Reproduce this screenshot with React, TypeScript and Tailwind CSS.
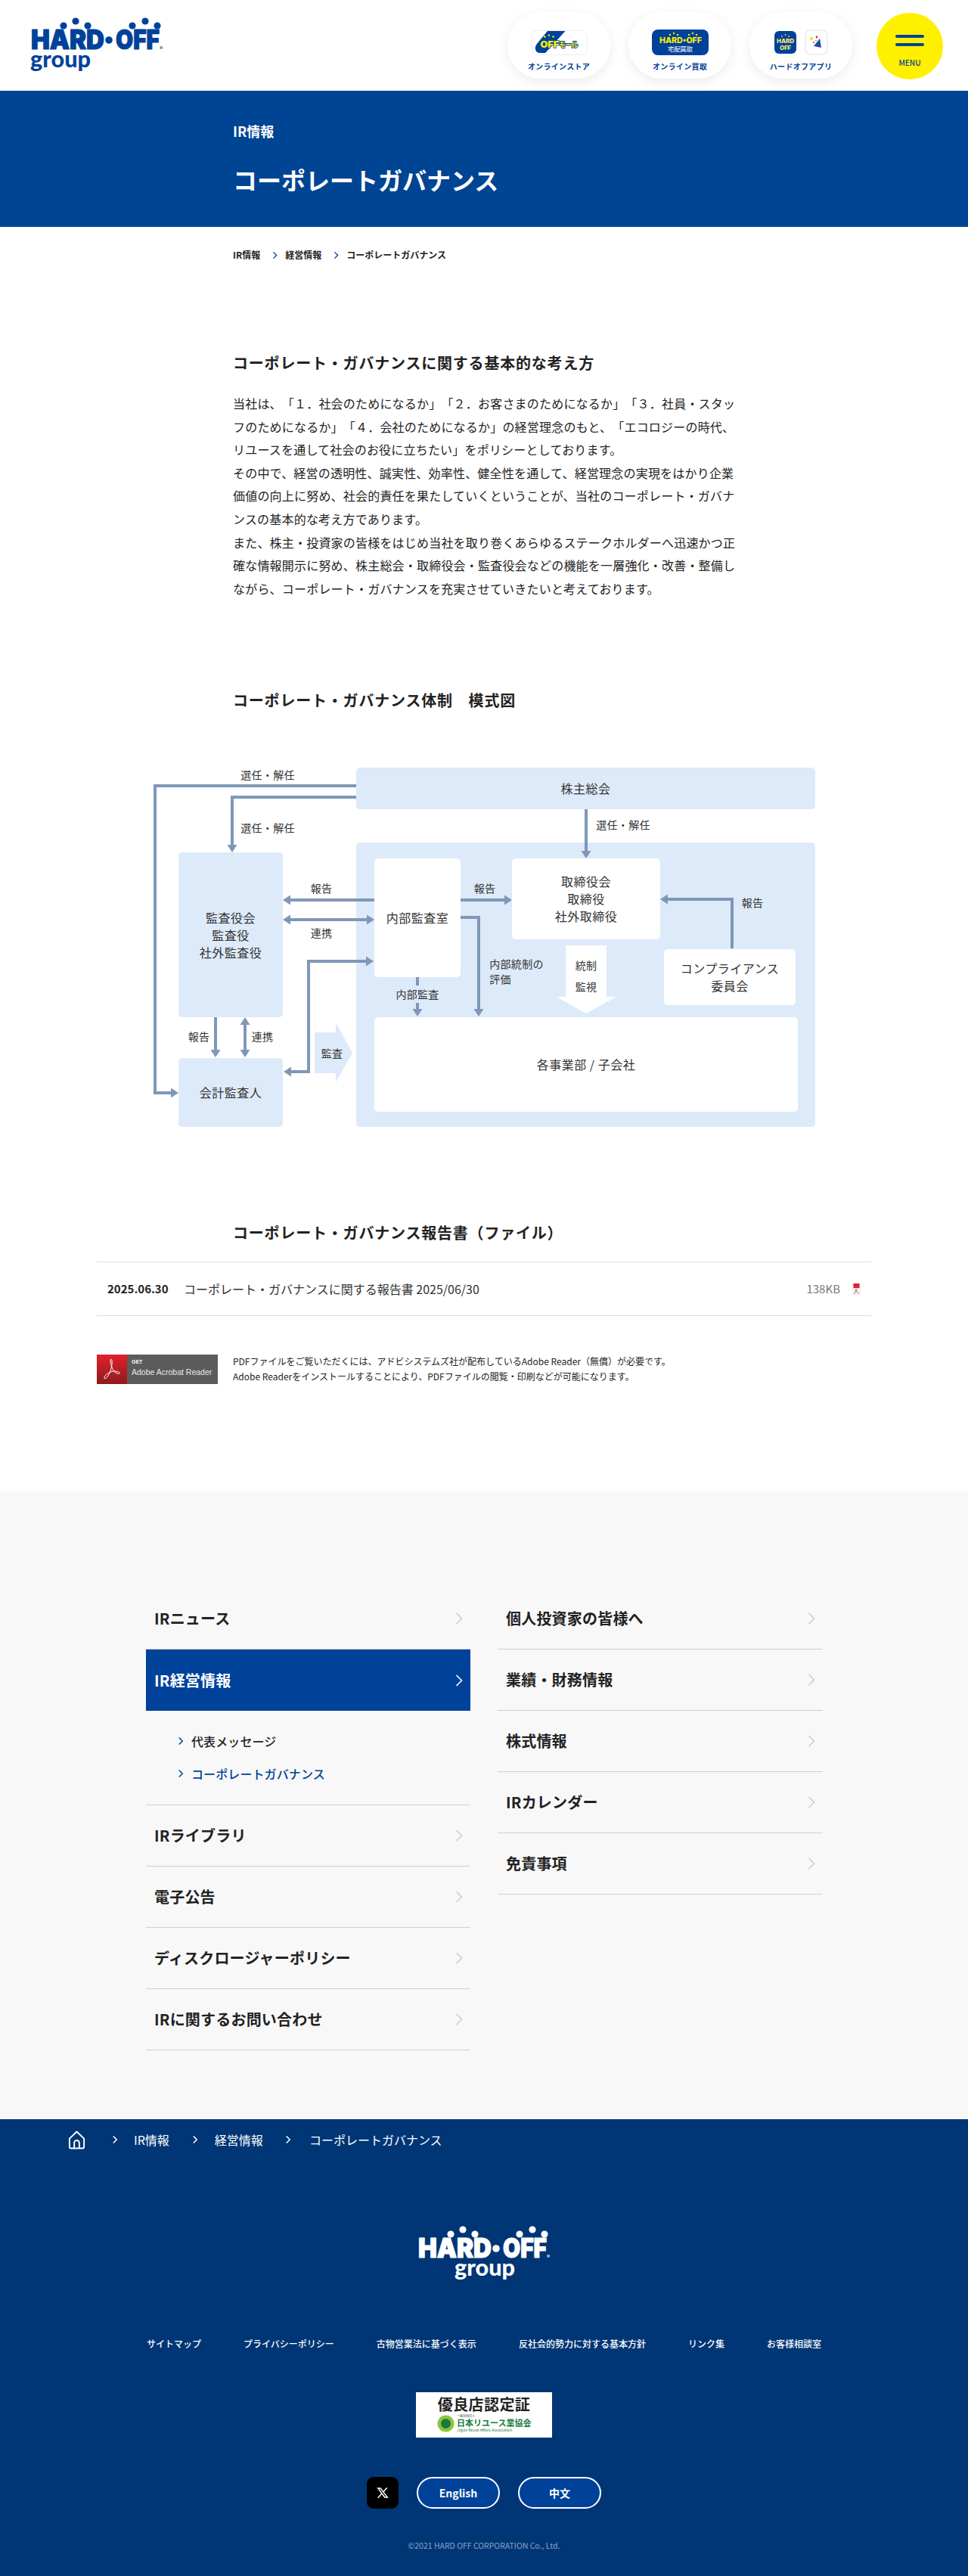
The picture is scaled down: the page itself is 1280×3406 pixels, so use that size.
import { RiTwitterXLine } from "react-icons/ri";

const Logo = ({ className, groupX = 0 }: { className: string; groupX?: number }) => {
  return (
    <svg viewBox="0 0 177 75" className={className} fill="currentColor">
      <circle cx="44" cy="11" r="4.6" />
      <circle cx="60" cy="5" r="4.6" />
      <circle cx="76" cy="11" r="4.6" />
      <circle cx="135" cy="11" r="4.6" />
      <circle cx="152" cy="5" r="4.6" />
      <circle cx="168" cy="11" r="4.6" />
      <text
        x="1"
        y="42"
        fontFamily="Inter, sans-serif"
        fontWeight="900"
        fontSize="35"
        textLength="97"
        lengthAdjust="spacingAndGlyphs"
        stroke="currentColor"
        strokeWidth="1.2"
        strokeLinejoin="round"
      >
        HARD
      </text>
      <circle cx="104" cy="30" r="4.8" />
      <text
        x="113"
        y="42"
        fontFamily="Inter, sans-serif"
        fontWeight="900"
        fontSize="35"
        textLength="58"
        lengthAdjust="spacingAndGlyphs"
        stroke="currentColor"
        strokeWidth="1.2"
        strokeLinejoin="round"
      >
        OFF
      </text>
      <text x="171" y="43" fontFamily="Inter, sans-serif" fontSize="6">
        ®
      </text>
      <text
        x={groupX}
        y="66"
        fontFamily="Lato, sans-serif"
        fontWeight="900"
        fontSize="30"
        textLength="80"
        lengthAdjust="spacingAndGlyphs"
      >
        group
      </text>
    </svg>
  );
};

const Chevron = ({ className }: { className: string }) => {
  return (
    <svg viewBox="0 0 10 16" className={className} fill="none" stroke="currentColor" strokeWidth="2">
      <path d="M2 2l6 6-6 6" />
    </svg>
  );
};

const OffMall = () => {
  return (
    <div className="w-[75px] h-[33px] rounded-lg border border-[#eeeeee] bg-white overflow-hidden">
      <svg viewBox="0 0 75 33" className="w-full h-full">
        <path d="M21 0h25L18 31h-6q-7 0-8-5-1-4 2-8z" fill="#00429a" />
        <g fill="#fff000">
          <circle cx="17" cy="8" r="1.3" />
          <circle cx="23" cy="6" r="1.3" />
          <circle cx="29" cy="8" r="1.3" />
        </g>
        <text
          x="11"
          y="23"
          fontFamily="Inter, sans-serif"
          fontWeight="900"
          fontSize="13"
          textLength="26"
          lengthAdjust="spacingAndGlyphs"
          fill="#fff000"
          stroke="#00429a"
          strokeWidth="1.5"
          paintOrder="stroke"
        >
          OFF
        </text>
        <text
          x="37"
          y="23"
          fontFamily="'Noto Sans CJK JP', sans-serif"
          fontWeight="700"
          fontSize="11"
          textLength="27"
          lengthAdjust="spacingAndGlyphs"
          fill="#fff000"
          stroke="#00429a"
          strokeWidth="2"
          paintOrder="stroke"
        >
          モール
        </text>
      </svg>
    </div>
  );
};

const TakuhaiLogo = () => {
  return (
    <div className="w-[75px] h-[34px] rounded-lg bg-[#00429a] overflow-hidden">
      <svg viewBox="0 0 75 34" className="w-full h-full">
        <g fill="#fff000">
          <circle cx="24" cy="7" r="1.2" />
          <circle cx="29" cy="5" r="1.2" />
          <circle cx="34" cy="7" r="1.2" />
          <circle cx="49" cy="7" r="1.2" />
          <circle cx="54" cy="5" r="1.2" />
          <circle cx="59" cy="7" r="1.2" />
        </g>
        <text
          x="10"
          y="18"
          fontFamily="Inter, sans-serif"
          fontWeight="800"
          fontSize="10.5"
          textLength="56"
          lengthAdjust="spacingAndGlyphs"
          fill="#fff000"
        >
          HARD•OFF
        </text>
        <text
          x="21"
          y="29"
          fontFamily="'Noto Sans CJK JP', sans-serif"
          fontSize="8.5"
          textLength="33"
          fill="#ffffff"
        >
          宅配買取
        </text>
      </svg>
    </div>
  );
};

const AppIcons = () => {
  return (
    <div className="flex items-center gap-[11px]">
      <div className="w-[29px] h-[30px] rounded-md bg-[#00429a] overflow-hidden">
        <svg viewBox="0 0 29 30" className="w-full h-full">
          <g fill="#f5e86a">
            <circle cx="10" cy="7" r="0.9" />
            <circle cx="14.5" cy="5" r="0.9" />
            <circle cx="19" cy="7" r="0.9" />
          </g>
          <text x="3" y="16" fontFamily="Inter, sans-serif" fontWeight="800" fontSize="8" textLength="23" fill="#f5e86a">
            HARD
          </text>
          <text x="7" y="25" fontFamily="Inter, sans-serif" fontWeight="800" fontSize="8" textLength="15" fill="#f5e86a">
            OFF
          </text>
        </svg>
      </div>
      <div className="w-[31px] h-[34px] rounded-lg border-2 border-[#f0f0f0] bg-white flex items-center justify-center">
        <svg viewBox="0 0 20 20" className="w-[20px] h-[20px]">
          <circle cx="4" cy="5" r="2" fill="#f5e400" />
          <circle cx="11" cy="3" r="1.4" fill="#d9262c" />
          <circle cx="7" cy="10" r="1" fill="#d9262c" />
          <circle cx="10" cy="7.5" r="0.8" fill="#2f9e44" />
          <path d="M15 5l2 12-10-2z" fill="#1d4f9c" />
        </svg>
      </div>
    </div>
  );
};

const HeaderPill = ({ label, children }: { label: string; children: React.ReactNode }) => {
  return (
    <a className="w-[136px] h-[88px] rounded-[44px] bg-white shadow-[0_4px_16px_rgba(0,0,0,0.08)] flex flex-col items-center pt-[23px]">
      <div className="h-[34px] flex items-center">{children}</div>
      <span className="mt-[7px] text-[10px] leading-[16px] font-bold tracking-[0.3px] text-[#00429a]">{label}</span>
    </a>
  );
};

const SectionTitle = ({ children }: { children: React.ReactNode }) => {
  return <h2 className="ml-[308px] h-[30px] leading-[30px] text-[20px] font-bold tracking-[0.8px] text-[#222222]">{children}</h2>;
};

const DiagramBox = ({ className, children }: { className: string; children?: React.ReactNode }) => {
  return (
    <div className={`absolute flex items-center justify-center text-center rounded-[5px] text-[16px] leading-[23px] tracking-[0.5px] text-[#333333] ${className}`}>
      <div>{children}</div>
    </div>
  );
};

const DiagramLabel = ({ className, children }: { className: string; children: React.ReactNode }) => {
  return (
    <span className={`absolute -translate-x-1/2 -translate-y-1/2 whitespace-nowrap text-[14px] leading-[20px] tracking-[0.3px] text-[#333333] ${className}`}>
      {children}
    </span>
  );
};

const Diagram = () => {
  return (
    <div className="relative mt-[74px] h-[475px]">
      <DiagramBox className="left-[471px] top-0 w-[607px] h-[55px] bg-[#ddeaf9]">株主総会</DiagramBox>
      <div className="absolute left-[471px] top-[99px] w-[607px] h-[376px] rounded-[5px] bg-[#ddeaf9]" />
      <DiagramBox className="left-[236px] top-[112px] w-[138px] h-[218px] bg-[#ddeaf9]">
        監査役会
        <br />
        監査役
        <br />
        社外監査役
      </DiagramBox>
      <DiagramBox className="left-[236px] top-[384px] w-[138px] h-[91px] bg-[#ddeaf9]">会計監査人</DiagramBox>
      <DiagramBox className="left-[495px] top-[120px] w-[114px] h-[157px] bg-white">内部監査室</DiagramBox>
      <DiagramBox className="left-[495px] top-[330px] w-[560px] h-[125px] bg-white">各事業部 / 子会社</DiagramBox>
      <DiagramBox className="left-[677px] top-[120px] w-[196px] h-[107px] bg-white">
        取締役会
        <br />
        取締役
        <br />
        社外取締役
      </DiagramBox>
      <DiagramBox className="left-[878px] top-[240px] w-[174px] h-[74px] bg-white">
        コンプライアンス
        <br />
        委員会
      </DiagramBox>

      {/* arrows */}
      <svg viewBox="0 0 1280 475" className="absolute left-0 top-0 w-[1280px] h-[475px]">
        <polygon points="748,235 802,235 802,303 815,303 775,325 736,303 748,303" fill="#ffffff" />
        <polygon points="416,350 444,350 444,337 466,377 444,416 444,404 416,404" fill="#ddeaf9" />
        <g fill="none" stroke="#7f97b8" strokeWidth="4">
          <path d="M471 24H205V430H227" />
          <path d="M471 39H307V103" />
          <path d="M495 175H383" />
          <path d="M383 201H486" />
          <path d="M609 175H668" />
          <path d="M609 198H633V320" />
          <path d="M552 277V288M552 311V320" />
          <path d="M968 239V174H882" />
          <path d="M775 55V111" />
          <path d="M285 330V374" />
          <path d="M324 339V374" />
          <path d="M384 402H408V256H485" />
        </g>
        <g fill="#7f97b8">
          <polygon points="226,423.5 226,436.5 236,430" />
          <polygon points="300.5,102 313.5,102 307,112" />
          <polygon points="384,168.5 384,181.5 374,175" />
          <polygon points="384,194.5 384,207.5 374,201" />
          <polygon points="485,194.5 485,207.5 495,201" />
          <polygon points="667,168.5 667,181.5 677,175" />
          <polygon points="626.5,319 639.5,319 633,329" />
          <polygon points="545.5,319 558.5,319 552,329" />
          <polygon points="883,167.5 883,180.5 873,174" />
          <polygon points="768.5,110 781.5,110 775,120" />
          <polygon points="278.5,373 291.5,373 285,383" />
          <polygon points="317.5,373 330.5,373 324,383" />
          <polygon points="317.5,340 330.5,340 324,330" />
          <polygon points="385,395.5 385,408.5 375,402" />
          <polygon points="484,249.5 484,262.5 494,256" />
        </g>
      </svg>

      <DiagramLabel className="left-[354px] top-[9px]">選任・解任</DiagramLabel>
      <DiagramLabel className="left-[354px] top-[79px]">選任・解任</DiagramLabel>
      <DiagramLabel className="left-[824px] top-[75px]">選任・解任</DiagramLabel>
      <DiagramLabel className="left-[425px] top-[159px]">報告</DiagramLabel>
      <DiagramLabel className="left-[425px] top-[218px]">連携</DiagramLabel>
      <DiagramLabel className="left-[641px] top-[159px]">報告</DiagramLabel>
      <DiagramLabel className="left-[995px] top-[178px]">報告</DiagramLabel>
      <DiagramLabel className="left-[683px] top-[269px] text-left">
        内部統制の
        <br />
        評価
      </DiagramLabel>
      <DiagramLabel className="left-[775px] top-[261px]">統制</DiagramLabel>
      <DiagramLabel className="left-[775px] top-[289px]">監視</DiagramLabel>
      <DiagramLabel className="left-[552px] top-[299px]">内部監査</DiagramLabel>
      <DiagramLabel className="left-[263px] top-[355px]">報告</DiagramLabel>
      <DiagramLabel className="left-[347px] top-[355px]">連携</DiagramLabel>
      <DiagramLabel className="left-[439px] top-[377px]">監査</DiagramLabel>
    </div>
  );
};

const AcrobatBadge = () => {
  return (
    <div className="w-[160px] h-[39px] flex bg-[#5c5c5c] shrink-0">
      <div className="w-[40px] h-full bg-gradient-to-b from-[#e2202c] to-[#8f1a1e] flex items-center justify-center">
        <svg viewBox="0 0 24 30" className="w-[24px] h-[30px]" fill="none" stroke="#ffffff" strokeWidth="1">
          <path d="M11 2c-2 0-1 8 3 15 2 3 6 5 8 4 1-2-3-3-8-3-5 1-11 4-12 8-1 3 3 2 5-2 3-5 6-14 5-20-0-1-1-2-1-2z" />
        </svg>
      </div>
      <div className="pl-[6px] pt-[5px] text-white font-['Liberation_Sans',sans-serif]">
        <div className="text-[7px] leading-[10px] font-bold">GET</div>
        <div className="text-[10.5px] leading-[16px] font-light text-[#e8e8e8] whitespace-nowrap">Adobe Acrobat Reader</div>
      </div>
    </div>
  );
};

const NavRow = ({ label, active = false }: { label: string; active?: boolean }) => {
  return (
    <a
      className={
        active
          ? "h-[81px] flex items-center justify-between pl-[11px] pr-[10px] bg-[#00429a] text-white text-[20px] font-bold tracking-[0.2px]"
          : "h-[81px] flex items-center justify-between pl-[11px] pr-[10px] border-b border-[#d0d0d0] text-[#222222] text-[20px] font-bold tracking-[0.2px]"
      }
    >
      <span>{label}</span>
      <svg viewBox="0 0 10 16" className={active ? "w-[10px] h-[16px] text-white" : "w-[10px] h-[16px] text-[#cccccc]"} fill="none" stroke="currentColor" strokeWidth="1.6">
        <path d="M1.5 1l7 7-7 7" />
      </svg>
    </a>
  );
};

const App = () => {
  return (
    <div className="w-full bg-white font-['Noto_Sans_CJK_JP',sans-serif] text-[#222222] [text-spacing-trim:space-all]">
      {/* header */}
      <header className="h-[120px] flex items-center justify-between pl-[40px] pr-[33px]">
        <Logo className="w-[177px] h-[75px] text-[#00429a]" />
        <div className="flex items-center">
          <div className="flex items-center gap-[24px]">
            <HeaderPill label="オンラインストア">
              <OffMall />
            </HeaderPill>
            <HeaderPill label="オンライン買取">
              <TakuhaiLogo />
            </HeaderPill>
            <HeaderPill label="ハードオフアプリ">
              <AppIcons />
            </HeaderPill>
          </div>
          <button className="ml-[32px] mt-[2px] w-[88px] h-[88px] rounded-full bg-[#fff000] flex flex-col items-center pt-[29px]">
            <span className="w-[38px] h-[4px] rounded-full bg-[#00429a]" />
            <span className="mt-[7px] w-[38px] h-[4px] rounded-full bg-[#00429a]" />
            <span className="mt-[15px] text-[10px] leading-[14px] text-[#00429a] font-medium">MENU</span>
          </button>
        </div>
      </header>

      {/* page title */}
      <section className="h-[180px] bg-[#004494] pl-[308px] pt-[40px] text-white">
        <p className="text-[18px] leading-[26px] font-bold">IR情報</p>
        <h1 className="mt-[28px] text-[32px] leading-[46px] font-bold">コーポレートガバナンス</h1>
      </section>

      {/* breadcrumb */}
      <nav className="mt-[27px] ml-[308px] h-[20px] flex items-center text-[12px] font-bold text-[#222222]">
        <span>IR情報</span>
        <Chevron className="ml-[16px] mr-[10px] w-[7px] h-[11px] text-[#00429a]" />
        <span>経営情報</span>
        <Chevron className="ml-[16px] mr-[10px] w-[7px] h-[11px] text-[#00429a]" />
        <span>コーポレートガバナンス</span>
      </nav>

      <main>
        <div className="mt-[118px]">
          <SectionTitle>コーポレート・ガバナンスに関する基本的な考え方</SectionTitle>
        </div>
        <p className="mt-[23px] ml-[308px] h-[275px] text-[16px] leading-[30.6px] tracking-[0.2px] text-[#222222] whitespace-nowrap">
          当社は、「１．社会のためになるか」「２．お客さまのためになるか」「３．社員・スタッ
          <br />
          フのためになるか」「４．会社のためになるか」の経営理念のもと、「エコロジーの時代、
          <br />
          リユースを通して社会のお役に立ちたい」をポリシーとしております。
          <br />
          その中で、経営の透明性、誠実性、効率性、健全性を通して、経営理念の実現をはかり企業
          <br />
          価値の向上に努め、社会的責任を果たしていくということが、当社のコーポレート・ガバナ
          <br />
          ンスの基本的な考え方であります。
          <br />
          また、株主・投資家の皆様をはじめ当社を取り巻くあらゆるステークホルダーへ迅速かつ正
          <br />
          確な情報開示に努め、株主総会・取締役会・監査役会などの機能を一層強化・改善・整備し
          <br />
          ながら、コーポレート・ガバナンスを充実させていきたいと考えております。
        </p>

        <div className="mt-[118px]">
          <SectionTitle>コーポレート・ガバナンス体制　模式図</SectionTitle>
        </div>
        <Diagram />

        <div className="mt-[125px]">
          <SectionTitle>コーポレート・ガバナンス報告書（ファイル）</SectionTitle>
        </div>
        <div className="mt-[23px] mx-[128px] h-[72px] border-y border-[#dddddd] flex items-center pl-[14px] pr-[14px]">
          <span className="w-[101px] text-[15px] font-bold text-[#222222]">2025.06.30</span>
          <span className="text-[16px] text-[#333333]">コーポレート・ガバナンスに関する報告書 2025/06/30</span>
          <span className="ml-auto text-[15px] text-[#777777]">138KB</span>
          <svg viewBox="0 0 11 15" className="ml-[16px] w-[11px] h-[15px]">
            <rect width="11" height="15" fill="#f1f1f1" />
            <rect x="1.5" width="8" height="6" fill="#d9262c" />
            <path d="M5 7c0 3 1 5 4 6M5 7c0 3-1 5-3 7" fill="none" stroke="#d9262c" strokeWidth="0.7" />
          </svg>
        </div>
        <div className="mt-[50px] ml-[128px] flex items-center gap-[20px]">
          <AcrobatBadge />
          <p className="text-[12px] leading-[20px] text-[#222222] whitespace-nowrap">
            PDFファイルをご覧いただくには、アドビシステムズ社が配布しているAdobe Reader（無償）が必要です。
            <br />
            Adobe Readerをインストールすることにより、PDFファイルの閲覧・印刷などが可能になります。
          </p>
        </div>
      </main>

      {/* side navigation */}
      <section className="mt-[142px] bg-[#f8f8f8] pt-[128px] pl-[193px] flex gap-[36px] h-[830px]">
        <div className="w-[429px]">
          <NavRow label="IRニュース" />
          <NavRow label="IR経営情報" active />
          <div className="h-[125px] border-b border-[#d0d0d0] pl-[42px] pt-[28px] flex flex-col gap-[19px] text-[16px] font-medium tracking-[0.1px]">
            <a className="h-[24px] flex items-center text-[#222222]">
              <Chevron className="mr-[10px] w-[8px] h-[12px] text-[#00429a]" />
              代表メッセージ
            </a>
            <a className="h-[24px] flex items-center text-[#00429a]">
              <Chevron className="mr-[10px] w-[8px] h-[12px] text-[#00429a]" />
              コーポレートガバナンス
            </a>
          </div>
          <NavRow label="IRライブラリ" />
          <NavRow label="電子公告" />
          <NavRow label="ディスクロージャーポリシー" />
          <NavRow label="IRに関するお問い合わせ" />
        </div>
        <div className="w-[430px]">
          <NavRow label="個人投資家の皆様へ" />
          <NavRow label="業績・財務情報" />
          <NavRow label="株式情報" />
          <NavRow label="IRカレンダー" />
          <NavRow label="免責事項" />
        </div>
      </section>

      {/* footer */}
      <footer className="h-[605px] bg-[#003675] text-white">
        <div className="pt-[14px] pl-[90px] h-[40px] flex items-center text-[16px]">
          <svg viewBox="0 0 24 26" className="w-[23px] h-[25px]" fill="none" stroke="currentColor" strokeWidth="2" strokeLinejoin="round">
            <path d="M2 11L12 1.5 22 11v11.5a2 2 0 0 1-2 2H4a2 2 0 0 1-2-2z" />
            <path d="M8.5 24.5V17a3.5 3.5 0 0 1 7 0v7.5" />
          </svg>
          <Chevron className="ml-[35px] mr-[21px] w-[8px] h-[12px]" />
          <span>IR情報</span>
          <Chevron className="ml-[30px] mr-[22px] w-[8px] h-[12px]" />
          <span>経営情報</span>
          <Chevron className="ml-[29px] mr-[24px] w-[8px] h-[12px]" />
          <span>コーポレートガバナンス</span>
        </div>
        <div className="mt-[101px] flex justify-center">
          <Logo className="w-[179px] h-[75px] text-white" groupX={49} />
        </div>
        <ul className="mt-[72px] flex justify-center gap-[56px] text-[12px] leading-[18px] font-medium">
          <li>サイトマップ</li>
          <li>プライバシーポリシー</li>
          <li>古物営業法に基づく表示</li>
          <li>反社会的勢力に対する基本方針</li>
          <li>リンク集</li>
          <li>お客様相談室</li>
        </ul>
        <div className="mt-[55px] mx-auto w-[180px] h-[60px] bg-white flex flex-col items-center pt-[3px]">
          <span className="text-[20px] leading-[26px] font-bold tracking-[0.4px] text-[#222222]">優良店認定証</span>
          <div className="flex items-center gap-[3px] w-[124px]">
            <svg viewBox="0 0 23 23" className="w-[23px] h-[23px] shrink-0">
              <circle cx="11.5" cy="11.5" r="11" fill="#8cc63f" />
              <circle cx="11.5" cy="11.5" r="6.5" fill="#1a7a3c" />
            </svg>
            <div className="flex flex-col">
              <span className="text-[4px] leading-[5px] text-[#333333]">一般社団法人</span>
              <span className="text-[11px] leading-[13px] font-bold text-[#1a7a3c] whitespace-nowrap">日本リユース業協会</span>
              <span className="text-[5px] leading-[6px] text-[#1a7a3c] whitespace-nowrap">Japan Reuse Affairs Association</span>
            </div>
          </div>
        </div>
        <div className="mt-[52px] flex justify-center items-center gap-[24px]">
          <a className="w-[42px] h-[42px] rounded-[9px] bg-black flex items-center justify-center">
            <RiTwitterXLine className="w-[18px] h-[18px] text-white" />
          </a>
          <a className="w-[110px] h-[42px] rounded-full border-2 border-white bg-[#00429a] flex items-center justify-center text-[14px] font-bold">
            English
          </a>
          <a className="w-[110px] h-[42px] rounded-full border-2 border-white bg-[#00429a] flex items-center justify-center text-[14px] font-bold">
            中文
          </a>
        </div>
        <p className="mt-[41px] text-center text-[10.5px] leading-[16px] text-[#8ea3c4]">©2021 HARD OFF CORPORATION Co., Ltd.</p>
      </footer>
    </div>
  );
};

export default App;
